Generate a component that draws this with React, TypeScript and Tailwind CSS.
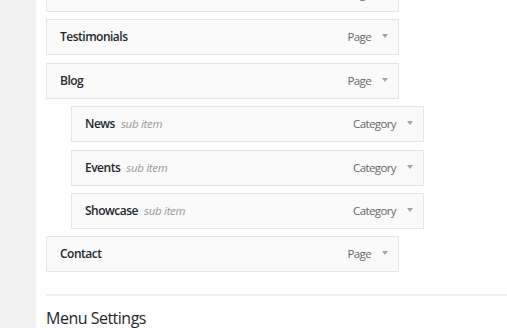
const ITEMS = [
  { title: '', type: 'Page', sub: false },
  { title: 'Testimonials', type: 'Page', sub: false },
  { title: 'Blog', type: 'Page', sub: false },
  { title: 'News', type: 'Category', sub: true },
  { title: 'Events', type: 'Category', sub: true },
  { title: 'Showcase', type: 'Category', sub: true },
  { title: 'Contact', type: 'Page', sub: false },
];

function Arrow() {
  return (
    <svg width="6" height="4" viewBox="0 0 6 4" className="mb-[2px] shrink-0 self-center">
      <path d="M0 0 L6 0 L3 4 Z" fill="#a0a5aa" />
    </svg>
  );
}

export default function App() {
  return (
    <div className="flex h-[328px] w-[507px] overflow-hidden bg-white font-['Open_Sans',sans-serif]">
      <div className="w-[36px] shrink-0 bg-[#f1f1f1]" />

      <div className="flex-1 pl-[10px]">
        <ul className="mt-[-24px] flex flex-col gap-[7.4px]">
          {ITEMS.map((item, i) => (
            <li
              key={i}
              className={`flex h-[36px] w-[353px] items-baseline justify-between border border-[#e5e5e5] bg-[#fafafa] pl-[13px] pr-[10px] pt-[9px] leading-[16px] ${
                item.sub ? 'ml-[25px]' : ''
              }`}
            >
              <span className="flex items-baseline gap-[6px]">
                <span className="text-[12px] font-semibold tracking-[-0.5px] text-[#23282d]">{item.title}</span>
                {item.sub && <span className="text-[11.5px] italic tracking-[-0.3px] text-[#999]">sub item</span>}
              </span>
              <span className="flex items-baseline gap-[11px]">
                <span className="text-[11.5px] tracking-[-0.6px] text-[#666]">{item.type}</span>
                <Arrow />
              </span>
            </li>
          ))}
        </ul>

        <div className="mt-[22px] border-t-2 border-[#eeeeee]" />
        <h3 className="mt-[12px] text-[16px] font-medium leading-[21px] tracking-[-0.5px] text-[#23282d]">Menu Settings</h3>
      </div>
    </div>
  );
}
